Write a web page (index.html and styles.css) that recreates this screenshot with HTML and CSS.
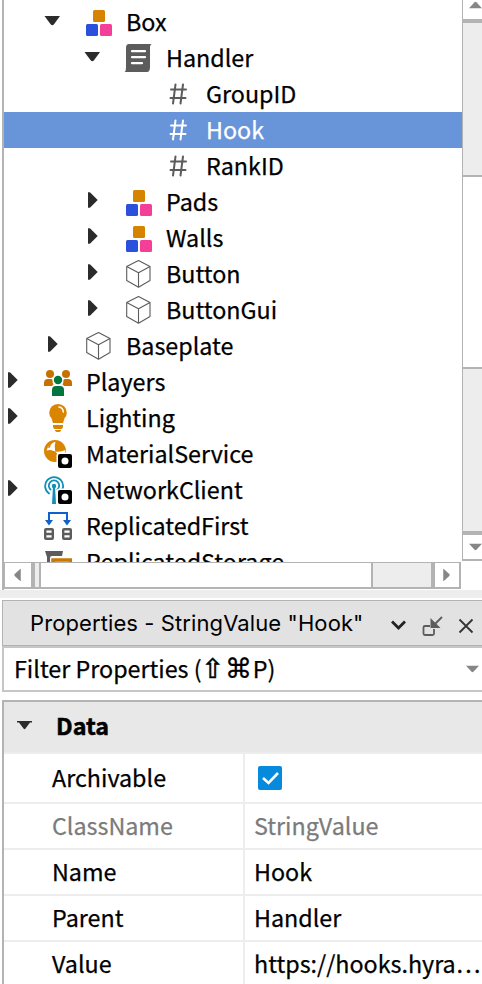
FILE: index.html
```html
<!DOCTYPE html>
<html lang="en">
<head>
<meta charset="utf-8">
<title>Explorer</title>
<link rel="stylesheet" href="styles.css">
</head>
<body>
<svg class="defs" width="0" height="0" aria-hidden="true">
  <symbol id="down" viewBox="0 0 20 36"><path d="M0.500 12h15.500l-6 8.200q-1.700 2.200-3.400 0z" fill="#2b2b2b"/></symbol>
  <symbol id="right" viewBox="0 0 20 36"><path d="M4 8.300h1.200q1 0 2 1.200l6.500 6.500-6.500 6.500q-1 1.300-2 1.300H4z" fill="#2b2b2b"/></symbol>
  <symbol id="model" viewBox="0 0 28 28"><rect x="9" y="2" width="12" height="12" rx="1.500" fill="#d68300"/><rect x="2" y="16" width="12" height="12" rx="1.500" fill="#2b50dc"/><rect x="16" y="16" width="12" height="12" rx="1.500" fill="#f43f98"/></symbol>
  <symbol id="script" viewBox="0 0 28 28"><path d="M5 0h22.500q-1.500 1-1.500 3v20q0 5-3 5H0.500q1.500-1 1.500-4V4q0-4 3-4z" fill="#5c5c5c"/><path d="M8 7.200h13M8 13.200h13M8 19.200h10" stroke="#fff" stroke-width="2.200" stroke-linecap="round"/></symbol>
  <symbol id="hash" viewBox="0 0 28 28"><path d="M11.500 4.500 9 23.500M19 4.500 16.500 23.500M7 9.500h15M6.500 18h15" fill="none" stroke="currentColor" stroke-width="2" stroke-linecap="round"/></symbol>
  <symbol id="part" viewBox="0 0 28 28"><path d="M14.500 .6 26 6.600v14L14.500 27.300 2.700 20.600v-14zM2.700 6.600l11.800 6.200L26 6.600M14.500 12.800v14.500" fill="none" stroke="#5c5c5c" stroke-width="1.100" stroke-linejoin="round"/></symbol>
  <symbol id="players" viewBox="0 0 28 28"><g fill="#c57000"><circle cx="6" cy="6" r="4"/><circle cx="22" cy="6" r="4"/><path d="M0 18v-3q0-4 4-4h3q1 0 1.500 1 0 3 1 4.500-1 .5-1.500 1.500zM28 18v-3q0-4-4-4h-3q-1 0-1.500 1 0 3-1 4.500 1 .5 1.500 1.500z"/></g><g fill="#03753f"><circle cx="14" cy="12" r="4.200"/><path d="M8 28v-6q0-4 4-4h4q4 0 4 4v6z"/></g></symbol>
  <symbol id="lighting" viewBox="0 0 28 28"><path d="M14 0q4 0 6.300 2.600 2.500 2.700 2.500 6.200 0 3-2.200 5.200l-1.600 5H9l-1.600-5Q5.200 12 5.200 8.800q0-3.500 2.500-6.200Q10 0 14 0zM9 21h10v1q0 3-2 3h-6q-2 0-2-3zM11 26h6q0 2-3 2t-3-2z" fill="#d98500"/><path d="M15 3q4 .5 4.300 5" fill="none" stroke="#fff" stroke-width="1.500" stroke-linecap="round"/></symbol>
  <symbol id="badge" viewBox="0 0 28 28"><rect x="12.500" y="12.500" width="18" height="18" rx="3" fill="#fff"/><rect x="14" y="14" width="14" height="14" rx="2" fill="#000"/><circle cx="21" cy="21" r="3.500" fill="#fff"/></symbol>
  <symbol id="material" viewBox="0 0 28 28"><circle cx="11" cy="11" r="11" fill="#d98500"/><path d="M2.500 10.500Q4 4 11.500 1.800 10 6 11.200 11.500 7 9 2.500 10.500zM11.200 11.500q5 1 10.300-1.500l-1 6-4 3z" fill="#fff"/><path d="M4 8Q4.500 4 9 2.500 6 5 6 7.500z" fill="#d98500"/><path d="M11.200 12q4 2 3 9l-3-3z" fill="#d98500"/><use href="#badge"/></symbol>
  <symbol id="network" viewBox="0 0 28 28"><g fill="none" stroke="#128fb7" stroke-width="1.800" stroke-linecap="round"><path d="M5 17.500A9 9 0 1 1 15.500 17.300M6.500 13.500A5.200 5.200 0 1 1 13.500 13.500"/></g><circle cx="10" cy="10" r="2.200" fill="#128fb7"/><path d="M9 10h2l1 18H8z" fill="#128fb7"/><use href="#badge"/></symbol>
  <symbol id="first" viewBox="0 0 28 28"><path d="M5 9V1h18v8" fill="none" stroke="#0f62ca" stroke-width="2"/><path d="M1 8h8l-4 5.500zM19 8h8l-4 5.500z" fill="#0f62ca"/><path d="M2 17.200h6q.8 0 .8.800v8q0 .8-.8.800H2q-.8 0-.8-.8v-8q0-.8.800-.8zM1 22h8M20 17.200h6q.8 0 .8.800v8q0 .8-.8.800h-6q-.8 0-.8-.8v-8q0-.8.800-.8zM19 22h8" fill="none" stroke="#5c5c5c" stroke-width="2.400"/></symbol>
  <symbol id="storage" viewBox="0 0 28 28"><path d="M1 3h18l-1 5H8q-2 0-2 2v8H3V9z" fill="#5c5c5c"/><path d="M9 20v-8h18v8" fill="#fff" stroke="#c97800" stroke-width="3.500"/></symbol>
  <symbol id="tri" viewBox="0 0 14 8"><path d="M0 .5h14L8 7q-1 1-2 0z" fill="#868686"/></symbol>
</svg>

<section class="explorer">
  <div class="tree">
    <div class="row l1"><svg class="arrow"><use href="#down"/></svg><svg class="icon"><use href="#model"/></svg><span>Box</span></div>
    <div class="row l2"><svg class="arrow"><use href="#down"/></svg><svg class="icon"><use href="#script"/></svg><span>Handler</span></div>
    <div class="row l3"><i class="arrow"></i><svg class="icon"><use href="#hash"/></svg><span>GroupID</span></div>
    <div class="row l3 selected"><i class="arrow"></i><svg class="icon"><use href="#hash"/></svg><span>Hook</span></div>
    <div class="row l3"><i class="arrow"></i><svg class="icon"><use href="#hash"/></svg><span>RankID</span></div>
    <div class="row l2"><svg class="arrow"><use href="#right"/></svg><svg class="icon"><use href="#model"/></svg><span>Pads</span></div>
    <div class="row l2"><svg class="arrow"><use href="#right"/></svg><svg class="icon"><use href="#model"/></svg><span>Walls</span></div>
    <div class="row l2"><svg class="arrow"><use href="#right"/></svg><svg class="icon"><use href="#part"/></svg><span>Button</span></div>
    <div class="row l2"><svg class="arrow"><use href="#right"/></svg><svg class="icon"><use href="#part"/></svg><span>ButtonGui</span></div>
    <div class="row l1"><svg class="arrow"><use href="#right"/></svg><svg class="icon"><use href="#part"/></svg><span>Baseplate</span></div>
    <div class="row"><svg class="arrow"><use href="#right"/></svg><svg class="icon"><use href="#players"/></svg><span>Players</span></div>
    <div class="row"><svg class="arrow"><use href="#right"/></svg><svg class="icon"><use href="#lighting"/></svg><span>Lighting</span></div>
    <div class="row"><i class="arrow"></i><svg class="icon"><use href="#material"/></svg><span>MaterialService</span></div>
    <div class="row"><svg class="arrow"><use href="#right"/></svg><svg class="icon"><use href="#network"/></svg><span>NetworkClient</span></div>
    <div class="row"><i class="arrow"></i><svg class="icon"><use href="#first"/></svg><span>ReplicatedFirst</span></div>
    <div class="row"><i class="arrow"></i><svg class="icon"><use href="#storage"/></svg><span>ReplicatedStorage</span></div>
  </div>
  <div class="vbar">
    <div class="vup"><svg class="tri flip"><use href="#tri"/></svg></div>
    <div class="vtrack"></div>
    <div class="vthumb"></div>
    <div class="vtrack2"></div>
    <div class="vdown"><svg class="tri"><use href="#tri"/></svg></div>
  </div>
  <div class="hbar">
    <div class="hleft"><svg class="tri turn-left"><use href="#tri"/></svg></div>
    <div class="htrack"></div>
    <div class="hthumb"></div>
    <div class="htrack2"></div>
    <div class="hright"><svg class="tri turn-right"><use href="#tri"/></svg></div>
  </div>
</section>
<div class="splitter"></div>

<header class="title">
  <span>Properties - StringValue "Hook"</span>
  <svg class="tools" viewBox="0 0 92 44"><path d="M2 20.500l6.500 6.500L15 20.500" fill="none" stroke="#222" stroke-width="2.800"/><path d="M40 25h-5q-1.500 0-1.500 1.500v6q0 1.500 1.500 1.500h7.500q1.500 0 1.500-1.500V28" fill="none" stroke="#5c5c5c" stroke-width="1.800"/><path d="M40.500 17v10h10l-3.700-3.700-2.600-2.600z" fill="#5c5c5c"/><path d="M44.500 23.500l7.500-7.500" stroke="#5c5c5c" stroke-width="1.800"/><path d="M69.500 18.500 82.500 31.500M82.500 18.500 69.500 31.500" stroke="#333" stroke-width="1.800"/></svg>
</header>
<div class="filter"><span>Filter Properties (<span class="keys"><span class="shift">⇧</span>⌘</span>P)</span><svg class="tri"><use href="#tri"/></svg></div>

<section class="table">
  <div class="group"><svg class="arrow" viewBox="0 0 15 9"><path d="M0 0h15v1.500h-2L8.500 7.500q-1 1.500-2 0L2 1.500H0z" fill="#2b2b2b"/></svg><b>Data</b></div>
  <div class="prop first"><span>Archivable</span><span><svg class="check" viewBox="0 0 24 24"><rect width="24" height="24" rx="2" fill="#058ade"/><path d="M5 12l5.500 5L20 7" fill="none" stroke="#fff" stroke-width="2.600"/></svg></span></div>
  <div class="prop muted"><span>ClassName</span><span>StringValue</span></div>
  <div class="prop"><span>Name</span><span>Hook</span></div>
  <div class="prop"><span>Parent</span><span>Handler</span></div>
  <div class="prop"><span>Value</span><span>https://hooks.hyra…</span></div>
</section>
</body>
</html>
```
FILE: styles.css
```css
* { box-sizing: border-box; }
body {
  margin: 0;
  width: 482px;
  height: 984px;
  overflow: hidden;
  background: #fff;
  color: #000;
  font: 23.3px/34px "Noto Sans CJK SC", sans-serif;
  -webkit-text-stroke: 0.25px currentColor;
}
svg { display: block; flex: none; }
span, b { white-space: nowrap; }
.defs { position: absolute; }

.explorer {
  display: grid;
  grid-template-columns: 458px 20px;
  grid-template-rows: 562px 28px;
  margin-left: 2px;
  border-left: 2px solid #b3b3b3;
}
.tree { height: 562px; padding-top: 4px; overflow: hidden; }
.row { display: flex; height: 36px; }
.l1 { padding-left: 40px; }
.l2 { padding-left: 80px; }
.l3 { padding-left: 120px; }
.row .arrow { width: 20px; height: 36px; margin-right: 20px; flex: none; }
.icon { width: 28px; height: 28px; margin: 4px 14px 0 0; color: #5c5c5c; }
.selected { background: #6894d9; color: #fff; }
.selected .icon { color: #fff; }

.tri { width: 13px; height: 8px; }
.flip { transform: rotate(180deg); }
.turn-left { transform: rotate(90deg); }
.turn-right { transform: rotate(-90deg); }

.vbar { display: flex; flex-direction: column; height: 561px; border-left: 1px solid #b3b3b3; overflow: hidden; }
.vbar > div { flex: none; }
.vup { height: 23px; padding: 1px 0 0 6px; border-bottom: 4px solid #b3b3b3; }
.vtrack { height: 154px; background: #ededed; border-bottom: 2px solid #b3b3b3; }
.vthumb { height: 192px; border-bottom: 2px solid #b3b3b3; }
.vtrack2 { height: 166px; background: #ededed; border-bottom: 4px solid #b3b3b3; }
.vdown { height: 26px; padding: 8px 0 0 6px; border-bottom: 2px solid #b3b3b3; }

.hbar { display: flex; width: 457px; height: 27px; border: solid #b3b3b3; border-width: 1px 2px 2px 1px; }
.hbar > div { flex: none; }
.hleft { width: 30px; padding: 8px 0 0 6px; border-right: 4px solid #b3b3b3; }
.htrack { width: 6px; background: #ededed; border-right: 2px solid #b3b3b3; }
.hthumb { width: 332px; border-right: 2px solid #b3b3b3; }
.htrack2 { width: 62px; background: #ededed; border-right: 4px solid #b3b3b3; }
.hright { width: 24px; padding: 8px 0 0 5px; }
.splitter { height: 8px; background: #ededed; }

.title {
  display: flex;
  justify-content: space-between;
  height: 46px;
  margin: 2px 0 0 2px;
  padding-left: 27px;
  border: 1px solid #b3b3b3;
  border-right: 0;
  background: #e2e2e2;
  font: 22px/45px Inter, sans-serif;
  letter-spacing: 0.1px;
  -webkit-text-stroke-width: 0;
}
.tools { width: 92px; height: 44px; }
.filter {
  display: flex;
  justify-content: space-between;
  height: 46px;
  margin-left: 2px;
  padding-left: 10px;
  border: 2px solid #c6c6c6;
  border-right: 0;
  line-height: 40px;
}
.filter .tri { margin: 17px 3px 0 0; }
.keys { font: 27px/0 "DejaVu Sans", sans-serif; letter-spacing: 0.8px; }
.shift { -webkit-text-stroke-width: 0.6px; }

.table { margin: 8px 0 0 2px; border: solid #b3b3b3; border-width: 2px 0 0 2px; }
.group { display: flex; height: 52px; background: #e8e8e8; border-bottom: 2px solid #ededed; line-height: 46px; }
.group b { -webkit-text-stroke-width: 0.5px; }
.group .arrow { width: 15px; height: 9px; margin: 19px 24px 0 13px; }
.prop { display: grid; grid-template-columns: 241px 237px; height: 46px; border-bottom: 2px solid #ededed; line-height: 42px; }
.prop.first { height: 50px; line-height: 46px; }
.prop > span { padding-left: 48px; border-right: 2px solid #ededed; }
.prop > span + span { padding-left: 9px; border: 0; }
.check { width: 24px; height: 24px; margin: 12px 0 0 4px; }
.muted { color: #7b7b7b; }
```
